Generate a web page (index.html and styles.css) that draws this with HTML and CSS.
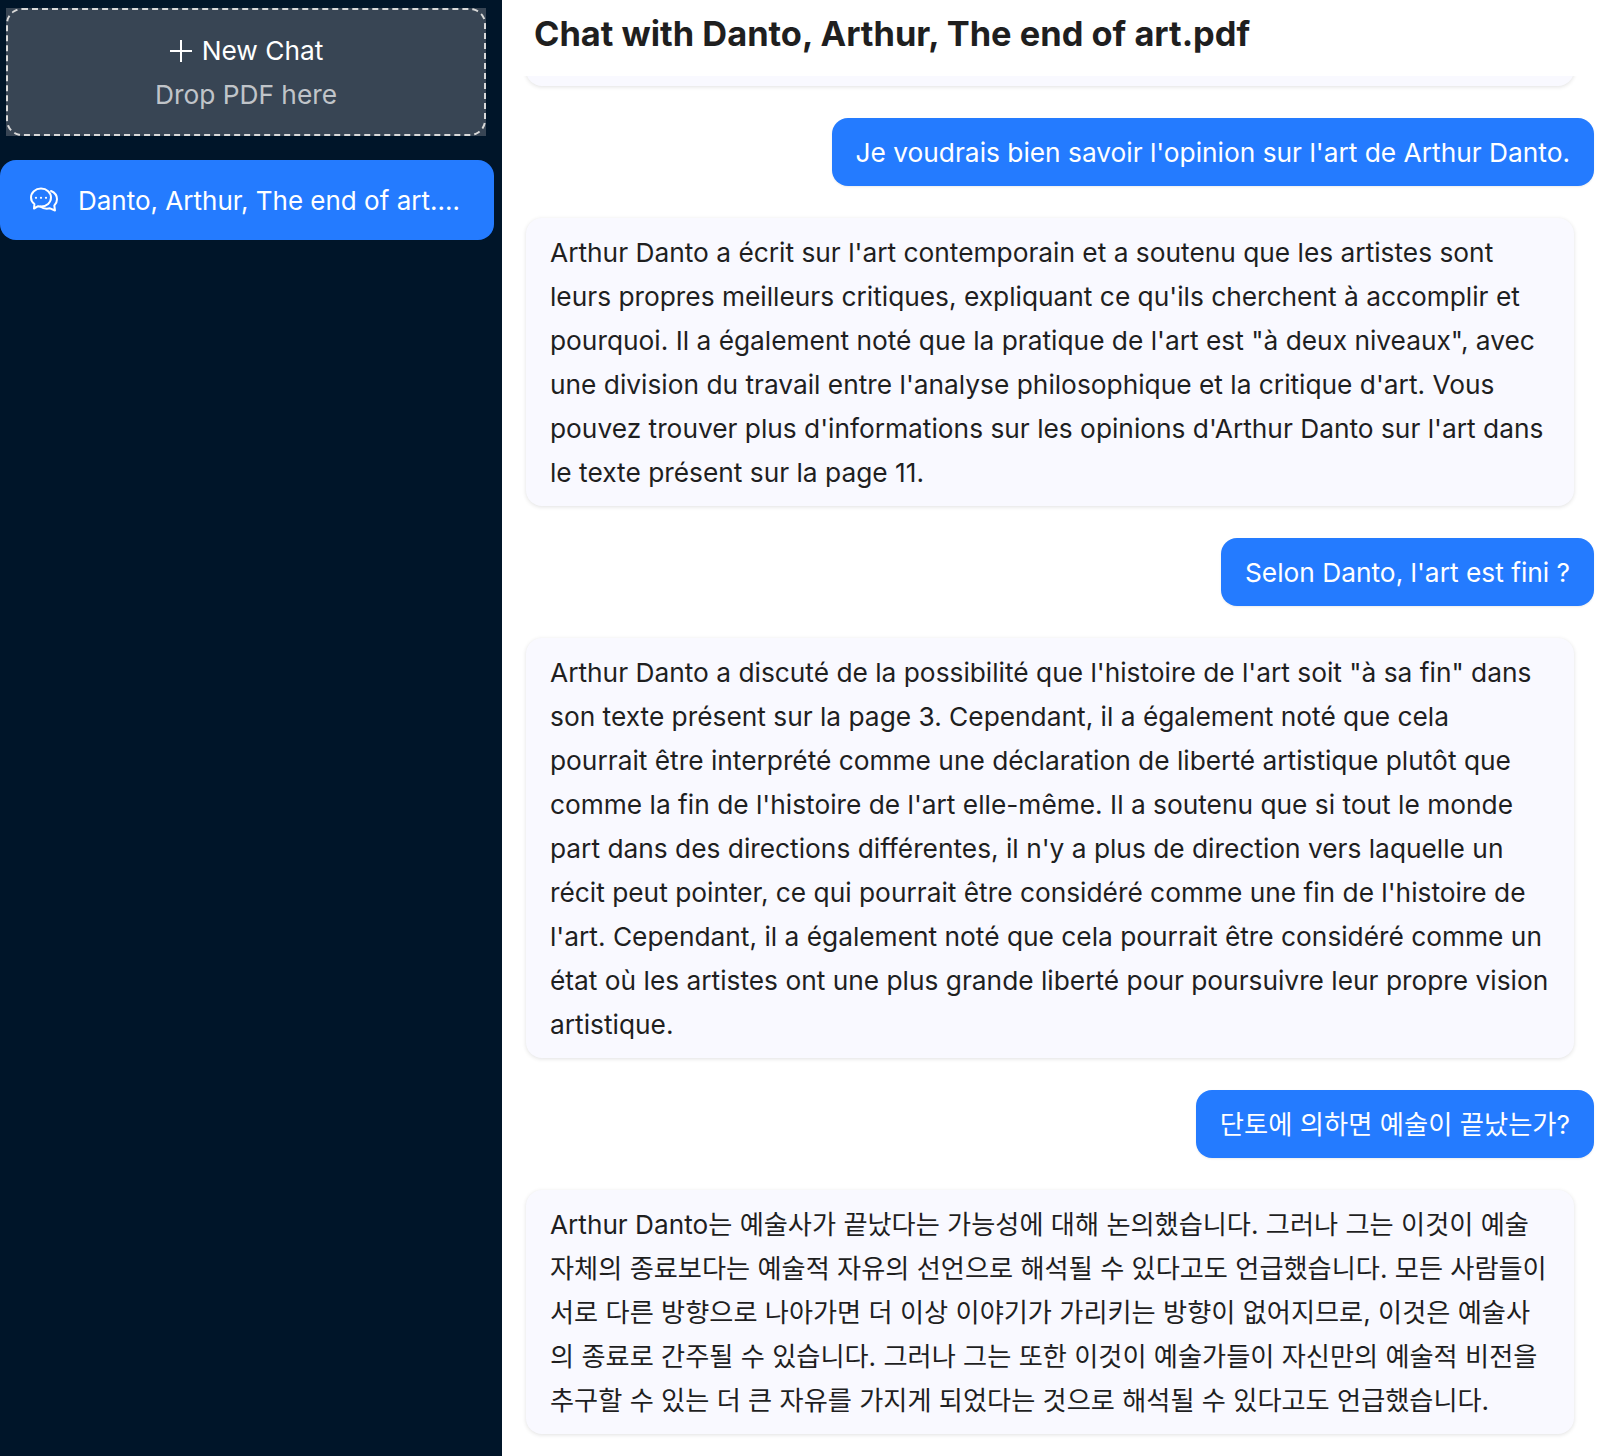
FILE: index.html
```html
<!DOCTYPE html>
<html lang="fr">
<head>
<meta charset="utf-8">
<title>Chat with Danto, Arthur, The end of art.pdf</title>
<link rel="stylesheet" href="styles.css">
</head>
<body>
<div class="app">
  <aside class="sidebar">
    <div class="drop">
      <div class="drop-inner">
        <div class="new-chat">
          <svg class="plus" viewBox="0 0 24 24" aria-hidden="true"><path d="M12 1v22M1 12h22"/></svg>
          <span>New Chat</span>
        </div>
        <div class="drop-hint">Drop PDF here</div>
      </div>
    </div>
    <div class="chat-item">
      <svg class="chat-icon" viewBox="0 0 28 26" aria-hidden="true">
        <path d="M11 1.600C5.300 1.600 1 5.500 1 10.500c0 2.700 1.300 5 3.400 6.500l-.4 4.500 4.200-2.300c.9.200 1.800.300 2.800.300 5.700 0 10-3.900 10-8.900S16.700 1.600 11 1.600z"/>
        <path d="M21 4c3.600 1.500 6 4.600 6 8.200 0 2.500-1 4.700-2.700 6.300l.7 5-5-2.200c-3.600.8-7.300.1-9.800-1.800"/>
        <circle class="dot" cx="6" cy="10.800" r="1.100"/><circle class="dot" cx="11" cy="10.800" r="1.100"/><circle class="dot" cx="16" cy="10.800" r="1.100"/>
      </svg>
      <span class="chat-title">Danto, Arthur, The end of art.pdf</span>
    </div>
  </aside>
  <main class="main">
    <header class="header"><h1>Chat with Danto, Arthur, The end of art.pdf</h1></header>
    <section class="messages">
      <div class="msg bot spacer"></div>
      <div class="msg user">Je voudrais bien savoir l'opinion sur l'art de Arthur Danto.</div>
      <div class="msg bot">Arthur Danto a écrit sur l'art contemporain et a soutenu que les artistes sont<br>leurs propres meilleurs critiques, expliquant ce qu'ils cherchent à accomplir et<br>pourquoi. Il a également noté que la pratique de l'art est "à deux niveaux", avec<br>une division du travail entre l'analyse philosophique et la critique d'art. Vous<br>pouvez trouver plus d'informations sur les opinions d'Arthur Danto sur l'art dans<br>le texte présent sur la page 11.</div>
      <div class="msg user">Selon Danto, l'art est fini ?</div>
      <div class="msg bot">Arthur Danto a discuté de la possibilité que l'histoire de l'art soit "à sa fin" dans<br>son texte présent sur la page 3. Cependant, il a également noté que cela<br>pourrait être interprété comme une déclaration de liberté artistique plutôt que<br>comme la fin de l'histoire de l'art elle-même. Il a soutenu que si tout le monde<br>part dans des directions différentes, il n'y a plus de direction vers laquelle un<br>récit peut pointer, ce qui pourrait être considéré comme une fin de l'histoire de<br>l'art. Cependant, il a également noté que cela pourrait être considéré comme un<br>état où les artistes ont une plus grande liberté pour poursuivre leur propre vision<br>artistique.</div>
      <div class="msg user" lang="ko">단토에 의하면 예술이 끝났는가?</div>
      <div class="msg bot bot-ko" lang="ko">Arthur Danto는 예술사가 끝났다는 가능성에 대해 논의했습니다. 그러나 그는 이것이 예술<br>자체의 종료보다는 예술적 자유의 선언으로 해석될 수 있다고도 언급했습니다. 모든 사람들이<br>서로 다른 방향으로 나아가면 더 이상 이야기가 가리키는 방향이 없어지므로, 이것은 예술사<br>의 종료로 간주될 수 있습니다. 그러나 그는 또한 이것이 예술가들이 자신만의 예술적 비전을<br>추구할 수 있는 더 큰 자유를 가지게 되었다는 것으로 해석될 수 있다고도 언급했습니다.</div>
    </section>
  </main>
</div>
</body>
</html>
```
FILE: styles.css
```css
* { box-sizing: border-box; }
html, body { margin: 0; height: 100%; }
body {
  font-family: Inter, "Noto Sans CJK KR", sans-serif;
  font-size: 26.3px;
  color: #1f1f1f;
  background: #fff;
}
.app { display: flex; height: 1456px; overflow: hidden; }
.sidebar {
  width: 502px;
  flex: none;
  background: #001529;
  padding: 8px 8px 0 0;
  display: flex;
  flex-direction: column;
  gap: 24px;
}
.drop {
  margin-left: 6px;
  width: 480px;
  height: 128px;
  background: #384554;
  display: flex;
}
.drop-inner {
  flex: 1;
  border: 2px dashed #d9d9d9;
  border-radius: 16px;
  display: flex;
  flex-direction: column;
  align-items: center;
  justify-content: center;
  line-height: 44px;
  padding-top: 2px;
}
.new-chat { display: flex; align-items: center; gap: 9px; color: #fff; }
.plus { width: 24px; height: 24px; fill: none; stroke: #fff; stroke-width: 2; }
.drop-hint { color: rgba(255, 255, 255, .7); }
.chat-item {
  width: 494px;
  height: 80px;
  background: #247bff;
  border-radius: 16px;
  color: #fff;
  display: flex;
  align-items: center;
  padding-left: 30px;
  gap: 20px;
}
.chat-icon { width: 28px; height: 26px; flex: none; fill: none; stroke: #fff; stroke-width: 2; stroke-linejoin: round; stroke-linecap: round; }
.chat-icon .dot { fill: #fff; stroke: none; }
.chat-title { width: 390px; font-size: 26px; white-space: nowrap; overflow: hidden; text-overflow: ellipsis; }
.main { flex: 1; min-width: 0; display: flex; flex-direction: column; }
.header { height: 76px; flex: none; padding: 0 0 8px 32px; display: flex; align-items: center; }
.header h1 { margin: 0; font-size: 34.4px; font-weight: 700; line-height: 1; color: #1f1f1f; }
.messages {
  flex: 1;
  min-height: 0;
  overflow: hidden;
  display: flex;
  flex-direction: column;
  justify-content: flex-end;
  gap: 32px;
  padding: 0 16px 22px 24px;
}
.msg { flex: none; line-height: 44px; border-radius: 16px; padding: 13px 24px 11px; white-space: nowrap; }
.user {
  align-self: flex-end;
  background: #247bff;
  color: #fff;
  box-shadow: 0 1px 2px rgba(0, 0, 0, .08);
}
.bot {
  width: 1048px;
  background: #f9f9ff;
  box-shadow: 0 1px 4px rgba(0, 0, 0, .12);
}
.bot-ko { font-size: 26.2px; }
.spacer { height: 120px; }
```
